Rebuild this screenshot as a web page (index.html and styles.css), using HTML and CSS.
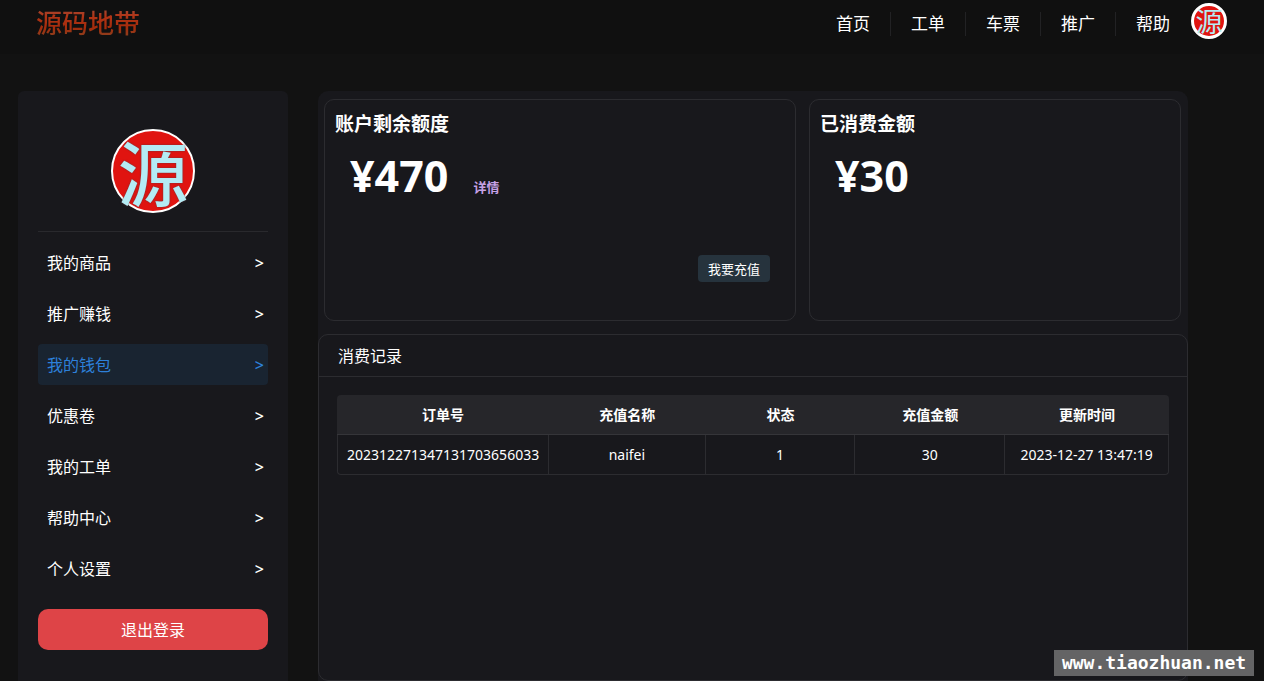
FILE: index.html
```html
<!DOCTYPE html>
<html lang="zh-CN">
<head>
<meta charset="utf-8">
<meta name="viewport" content="width=device-width, initial-scale=1">
<title>我的钱包</title>
<link rel="stylesheet" href="styles.css">
</head>
<body>
<header class="topbar">
  <a class="logo" href="#">源码地带</a>
  <nav class="nav">
    <a class="nav-link" href="#">首页</a>
    <a class="nav-link" href="#">工单</a>
    <a class="nav-link" href="#">车票</a>
    <a class="nav-link" href="#">推广</a>
    <a class="nav-link" href="#">帮助</a>
  </nav>
  <a class="avatar avatar-small" href="#">源</a>
</header>
<main class="page">
  <aside class="sidebar">
    <div class="profile"><div class="avatar avatar-large">源</div></div>
    <nav class="menu">
      <a class="menu-item" href="#"><span>我的商品</span><span class="arrow">&gt;</span></a>
      <a class="menu-item" href="#"><span>推广赚钱</span><span class="arrow">&gt;</span></a>
      <a class="menu-item active" href="#" aria-current="page"><span>我的钱包</span><span class="arrow">&gt;</span></a>
      <a class="menu-item" href="#"><span>优惠卷</span><span class="arrow">&gt;</span></a>
      <a class="menu-item" href="#"><span>我的工单</span><span class="arrow">&gt;</span></a>
      <a class="menu-item" href="#"><span>帮助中心</span><span class="arrow">&gt;</span></a>
      <a class="menu-item" href="#"><span>个人设置</span><span class="arrow">&gt;</span></a>
    </nav>
    <button class="logout" type="button">退出登录</button>
  </aside>
  <div class="content">
    <div class="cards">
      <section class="card">
        <h2 class="card-title">账户剩余额度</h2>
        <div class="amount-row"><span class="amount">¥470</span><a class="detail" href="#">详情</a></div>
        <button class="recharge" type="button">我要充值</button>
      </section>
      <section class="card">
        <h2 class="card-title">已消费金额</h2>
        <div class="amount-row"><span class="amount">¥30</span></div>
      </section>
    </div>
    <section class="records">
      <h2 class="records-title">消费记录</h2>
      <div class="records-body">
        <table class="table">
          <colgroup><col class="col-id"><col class="col-name"><col class="col-state"><col class="col-sum"><col class="col-time"></colgroup>
          <thead><tr><th>订单号</th><th>充值名称</th><th>状态</th><th>充值金额</th><th>更新时间</th></tr></thead>
          <tbody><tr><td>202312271347131703656033</td><td>naifei</td><td>1</td><td>30</td><td>2023-12-27 13:47:19</td></tr></tbody>
        </table>
      </div>
    </section>
  </div>
</main>
<div class="watermark">www.tiaozhuan.net</div>
</body>
</html>
```
FILE: styles.css
```css
* { box-sizing: border-box; }
html { height: 100%; }
body {
  margin: 0;
  height: 100%;
  overflow: hidden;
  display: flex;
  flex-direction: column;
  background: #121212;
  color: #fff;
  font: 16px/24px "Noto Sans", "Noto Sans CJK SC", sans-serif;
}
a { color: inherit; text-decoration: none; }
button { font: inherit; color: inherit; border: 0; cursor: pointer; }
h2 { margin: 0; }

.topbar {
  flex: none;
  display: flex;
  align-items: flex-start;
  height: 54px;
  padding: 3px 37px 0 36px;
  background: #101010;
}
.logo {
  margin-right: auto;
  font: 500 26px/38px "Noto Sans CJK SC", sans-serif;
  color: transparent;
  background: linear-gradient(#94584a, #b03416 35%, #a52c0c 65%, #7c4a28);
  background-clip: text;
  -webkit-background-clip: text;
}
.nav { display: flex; padding-top: 9px; }
.nav-link { padding: 0 20px; font-size: 17px; border-right: 1px solid #222224; }
.nav-link:last-child { padding-right: 21px; border-right: 0; }

.avatar {
  display: flex;
  align-items: center;
  justify-content: center;
  border: 2px solid #fff;
  border-radius: 50%;
  background: #e01410;
  color: #b4ebf4;
  font-family: "Noto Sans CJK SC", sans-serif;
}
.avatar-small { width: 36px; height: 36px; border-width: 3px; font-size: 27px; line-height: 30px; }
.avatar-large {
  width: 84px;
  height: 84px;
  font-size: 70px;
  line-height: 80px;
  font-weight: 500;
  text-shadow: 0 0 2px #5d3a40;
}

.page { flex: 1; display: flex; gap: 30px; min-height: 0; padding: 37px 76px 0 18px; }
.sidebar { flex: none; width: 270px; padding: 38px 20px 0; background: #18181c; border-radius: 6px 6px 0 0; }
.profile { display: flex; justify-content: center; padding-bottom: 18px; border-bottom: 1px solid #29292d; }
.menu { display: flex; flex-direction: column; gap: 10px; padding: 10px 0 20px; }
.menu-item {
  display: flex;
  align-items: center;
  justify-content: space-between;
  height: 41px;
  padding: 1px 4px 0 9px;
  border-radius: 4px;
}
.menu-item.active { background: #192431; color: #2d80da; }
.arrow { font-weight: 500; }
.logout { width: 100%; height: 41px; border-radius: 10px; background: #de4447; }

.content {
  flex: 1;
  display: flex;
  flex-direction: column;
  min-width: 0;
  background: #18181c;
  border-radius: 10px 10px 0 0;
}
.cards { display: grid; grid-template-columns: 472fr 372fr; gap: 13px; padding: 8px 7px 13px 6px; }
.card {
  display: flex;
  flex-direction: column;
  height: 222px;
  padding: 11px 25px 38px 10px;
  border: 1px solid #2c2c30;
  border-radius: 10px;
}
.card-title { font-size: 19px; line-height: 26px; }
.amount-row { display: flex; align-items: baseline; gap: 25px; padding: 9px 0 0 15px; }
.amount { font-size: 43px; line-height: 60px; font-weight: 700; }
.detail { font-size: 13px; font-weight: 700; color: #c6a1e6; }
.recharge {
  align-self: flex-end;
  margin-top: auto;
  height: 27px;
  padding: 0 10px;
  border-radius: 4px;
  background: #26333d;
  font-size: 13px;
}

.records { flex: 1; border: 1px solid #2c2c30; border-radius: 10px; }
.records-title {
  padding: 9px 19px 8px;
  border-bottom: 1px solid #2c2c30;
  font-size: 16px;
  font-weight: 400;
}
.records-body { padding: 18px; }
.table {
  width: 100%;
  table-layout: fixed;
  border-collapse: separate;
  border-spacing: 0;
  font-size: 14px;
  line-height: 20px;
  text-align: center;
}
.col-id { width: 25.5%; }
.col-name { width: 18.8%; }
.col-state, .col-sum { width: 18%; }
.col-time { width: 19.7%; }
.table th, .table td { padding: 9px 0; white-space: nowrap; }
.table th { height: 40px; padding: 10px 0 9px; background: #26262a; border-bottom: 1px solid #353539; }
.table th:first-child { border-top-left-radius: 4px; }
.table th:last-child { border-top-right-radius: 4px; }
.table td { height: 40px; border: 0 solid #2c2c30; border-width: 0 1px 1px 0; }
.table td:first-child { border-left-width: 1px; border-bottom-left-radius: 4px; }
.table td:last-child { border-bottom-right-radius: 4px; }

.watermark {
  position: fixed;
  right: 10px;
  bottom: 5px;
  width: 200px;
  background: #646465;
  font: bold 18px/26px "DejaVu Sans Mono", monospace;
  text-align: center;
}
```
